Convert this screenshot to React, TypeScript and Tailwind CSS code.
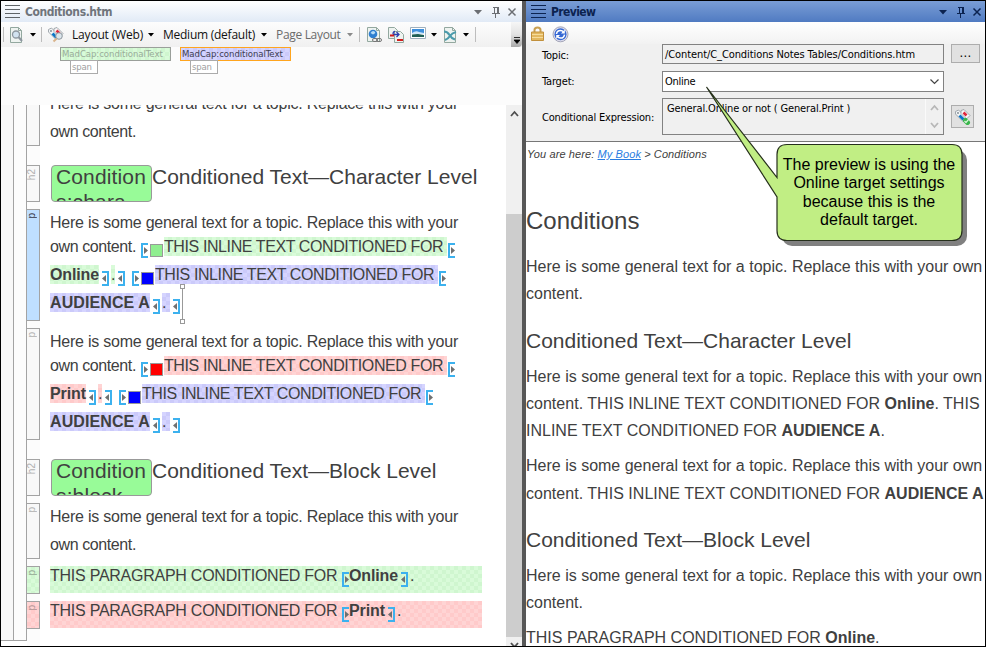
import type { ReactNode } from "react";

const GREEN = "bg-[repeating-conic-gradient(#cff6cf_0_25%,#d9fbd9_0_50%)] bg-[length:8px_8px]";
const BLUE = "bg-[repeating-conic-gradient(#cbcafa_0_25%,#d5d4ff_0_50%)] bg-[length:8px_8px]";
const RED = "bg-[repeating-conic-gradient(#ffcaca_0_25%,#ffd4d4_0_50%)] bg-[length:8px_8px]";
const TAHOMA = "font-['DejaVu_Sans_Condensed','DejaVu_Sans',sans-serif]";

function Lines({ color }: { color: string }) {
  return (
    <svg width="15" height="14" className="shrink-0" shapeRendering="crispEdges">
      <path d="M0 .5h15M0 4.5h15M0 8.5h15M0 12.5h15" stroke={color} />
    </svg>
  );
}

function WindowButtons({ color }: { color: string }) {
  return (
    <svg width="44" height="14" className="shrink-0" fill="none" stroke={color}>
      <path d="M1 5h8l-4 4.500z" fill={color} stroke="none" />
      <path d="M20 2.500h6M21.500 2v7M25.500 2v7M24.500 2v7M19 8.500h8M22.500 9v4" shapeRendering="crispEdges" />
      <path d="M35.500 3.500l7 7M42.500 3.500l-7 7" strokeWidth="1.500" />
    </svg>
  );
}

function Caret({ className, color = "#000" }: { className: string; color?: string }) {
  return (
    <svg width="6" height="4" className={"shrink-0 " + className}>
      <path d="M0 0h6l-3 3.400z" fill={color} />
    </svg>
  );
}

function Sep({ className }: { className: string }) {
  return <div className={"h-[15px] w-px shrink-0 bg-[#bdbdbd] " + className} />;
}

function TagsIcon() {
  return (
    <g>
      <path d="M1.500 2.500l3-1.500 8 8-3.500 3.500-7.500-7.500z" fill="#f1f4f6" stroke="#9aa0a6" strokeWidth=".9" />
      <path d="M7 1.500l3-1L16 6.500 12.500 10 7 4.500z" fill="#f6f6f6" stroke="#9aa0a6" strokeWidth=".9" />
      <circle cx="4" cy="4" r=".9" fill="#7d858c" />
      <path d="M5.500 6.500l4 4" stroke="#0a76c8" strokeWidth="2.800" />
      <path d="M9.500 3.500l3 3" stroke="#e0263a" strokeWidth="2.600" />
    </g>
  );
}

function Open({ className = "" }: { className?: string }) {
  return (
    <svg width="7" height="15" className={"mt-[6px] shrink-0 " + className}>
      <path d="M7 1H1v13h6" fill="none" stroke="#3cb1ee" strokeWidth="2" />
      <path d="M3 4l4 3.500L3 11z" fill="#707070" />
    </svg>
  );
}

function Close({ className }: { className: string }) {
  return (
    <svg width="7" height="15" className={"mt-[6px] shrink-0 " + className}>
      <path d="M0 1h6v13H0" fill="none" stroke="#3cb1ee" strokeWidth="2" />
      <path d="M4 4L0 7.500 4 11z" fill="#707070" />
    </svg>
  );
}

function Square({ className }: { className: string }) {
  return <div className={"mt-[7px] ml-[2px] mr-px size-[13px] shrink-0 border border-[#999] " + className} />;
}

function Row({ className = "", children }: { className?: string; children: ReactNode }) {
  return <div className={"flex h-[19px] shrink-0 whitespace-nowrap leading-[19px] " + className}>{children}</div>;
}

const general = "Here is some general text for a topic. Replace this with your";

function Inline({ tone }: { tone: string }) {
  return <span className={"w-[283px] shrink-0 tracking-[-0.4px] " + tone}>THIS INLINE TEXT CONDITIONED FOR</span>;
}

function Audience() {
  return (
    <>
      <b className={"w-[100px] shrink-0 tracking-[0.1px] " + BLUE}>AUDIENCE A</b>
      <Close className="ml-[3px]" />
      <span className={"ml-[2px] w-[8px] shrink-0 " + BLUE}>.</span>
      <Close className="ml-[3px]" />
    </>
  );
}

function Heading({ tail, children }: { tail: string; children: ReactNode }) {
  return (
    <div className="flex h-[37px] shrink-0 whitespace-nowrap pl-px text-[21px] leading-6">
      <div className="w-[101px] shrink-0 overflow-hidden rounded-[4px] border border-[#999] bg-[#98fb98] pl-1 tracking-[0.14px]">
        <div className="-mt-px">Condition</div>
        <div className="mt-px">{tail}</div>
      </div>
      <div>{children}</div>
    </div>
  );
}

function Block({ label, className }: { label: string; className: string }) {
  return (
    <div className={"flex w-[13px] shrink-0 justify-end border-r border-y border-[#a3a3a3] pr-[3px] pt-[3px] " + className}>
      <span className="rotate-180 self-start text-[10px] leading-[9px] [writing-mode:vertical-rl]">{label}</span>
    </div>
  );
}

function ElementTag({ frame, fill }: { frame: string; fill: string }) {
  return (
    <div className={"flex w-[111px] shrink-0 flex-col " + TAHOMA}>
      <div className={"h-[14px] whitespace-nowrap border pl-px text-[9.500px] leading-[12px] tracking-[-0.05px] " + frame + " " + fill}>
        MadCap:conditionalText
      </div>
      <div className="-mt-px ml-[10px] h-[14px] w-[28px] border border-[#ababab] bg-white pl-px text-[9.500px] leading-[12px] tracking-[-0.2px] text-[#a0a0a0]">
        span
      </div>
    </div>
  );
}

function Editor() {
  return (
    <div className="flex w-[521px] shrink-0 flex-col bg-white">
      <div className="flex h-[21px] shrink-0 items-center bg-linear-to-b from-white to-[#e1eaf6] pl-1">
        <Lines color="#5f6468" />
        <span className={"ml-[5px] text-[12px] font-bold tracking-[-0.42px] text-[#70757c] " + TAHOMA}>Conditions.htm</span>
        <div className="ml-auto mr-[5px]">
          <WindowButtons color="#6b6e73" />
        </div>
      </div>
      <div className="flex h-[25px] shrink-0 items-center bg-linear-to-b from-[#fdfdfd] to-[#f0f0f0] pl-[2px] font-['Open_Sans',sans-serif] text-[12px] whitespace-nowrap text-[#111]">
        <Sep className="" />
        <svg width="14" height="16" className="ml-[6px] shrink-0">
          <path d="M.5.5h8l3 3v12H.5z" fill="#eef3f0" stroke="#93a89f" />
          <path d="M8.500.5v3h3" fill="none" stroke="#93a89f" />
          <circle cx="6" cy="7.500" r="3.500" fill="#d2e3f0" stroke="#8d979f" strokeWidth="1.300" />
          <path d="M8.500 10l3.500 4" stroke="#8d979f" strokeWidth="2" />
        </svg>
        <Caret className="ml-[6px]" />
        <Sep className="ml-[5px]" />
        <svg width="17" height="16" className="ml-[5px] shrink-0">
          <TagsIcon />
          <circle cx="12" cy="9" r="3.300" fill="#dce6ec" stroke="#8d979f" />
          <path d="M9.700 11.500L6.500 14.500" stroke="#d9b48c" strokeWidth="2" />
        </svg>
        <span className="ml-[8px] w-[71px] tracking-[-0.18px]">Layout (Web)</span>
        <Caret className="ml-[5px]" />
        <span className="ml-[9px] w-[92px] tracking-[-0.25px]">Medium (default)</span>
        <Caret className="ml-[6px]" />
        <span className="ml-[9px] w-[65px] tracking-[-0.32px] text-[#6b6b6b]">Page Layout</span>
        <Caret className="ml-[6px]" color="#8a8a8a" />
        <Sep className="ml-[6px]" />
        <svg width="15" height="16" className="ml-[7px] shrink-0">
          <path d="M.5.5h9l3 3v11H.5z" fill="#eef3f0" stroke="#93a89f" />
          <path d="M9.500.5v3h3" fill="none" stroke="#93a89f" />
          <circle cx="6" cy="7" r="4.300" fill="#2f7fd0" />
          <path d="M3.500 6q2-3 4-1.500t-1.500 3z" fill="#b5dcf7" />
          <rect x="5.500" y="11.500" width="5" height="3" rx="1.500" fill="#eee" stroke="#777" />
          <rect x="9.500" y="11.500" width="5" height="3" rx="1.500" fill="none" stroke="#777" />
        </svg>
        <svg width="17" height="16" className="ml-[6px] shrink-0">
          <path d="M.5.5h6l3 3v8h-9z" fill="#eef3f0" stroke="#93a89f" />
          <path d="M6.500 4.500h6l3 3v8h-9z" fill="#eef3f0" stroke="#93a89f" />
          <path d="M5 7.500h6M8.500 5l2.500 2.500L8.500 10M5 7.500q0-3 2-3" fill="none" stroke="#2c3fae" strokeWidth="1.300" />
          <path d="M2 8.500h4M9 13h6" stroke="#d21c1c" strokeWidth="2" />
        </svg>
        <svg width="17" height="13" className="ml-[5px] -mt-[3px] shrink-0">
          <path d="M.5.500h15v11H.5z" fill="#fff" stroke="#9fb0bd" />
          <path d="M2 2h12v4H2z" fill="#3d8fdc" />
          <path d="M2 6q4-3 7-1l5 1v1H2z" fill="#cfe7fa" />
          <path d="M2 7.500l6-.5 6 1V10H2z" fill="#1f5f55" />
        </svg>
        <Caret className="ml-[4px]" />
        <svg width="14" height="16" className="ml-[7px] shrink-0">
          <path d="M.5.5h8l3 3v12H.5z" fill="#eef3f0" stroke="#93a89f" />
          <path d="M8.500.5v3h3" fill="none" stroke="#93a89f" />
          <path d="M0 4.500q3.500 0 5.500 3.500t5.500 4.500M12 5Q8 6 6 9t-5 4" fill="none" stroke="#4a9aab" strokeWidth="2.200" />
        </svg>
        <Caret className="ml-[5px]" />
        <Sep className="ml-[6px]" />
        <div className="ml-auto flex h-[25px] w-[11px] items-end justify-center rounded-br-[4px] bg-linear-to-b from-[#f6f6f6] via-[#e2e2e2] to-[#a8a8a8] pb-[3px]">
          <svg width="6" height="7">
            <path d="M0 .5h6M0 3h6L3 6.500z" fill="#000" stroke="#000" strokeWidth=".8" />
          </svg>
        </div>
      </div>
      <div className="flex h-[58px] shrink-0 gap-[9px] bg-[#fcfcfc] pl-[59px]">
        <ElementTag frame="border-[#9a9f9a] text-[#9aac9a]" fill={GREEN} />
        <ElementTag frame="border-[#ffa51e] text-[#3c3c50]" fill={BLUE} />
      </div>
      <div className="flex min-h-0 flex-1 overflow-hidden">
        <div className="flex h-[536px] shrink-0 border-b border-[#a3a3a3]">
          <div className="w-[13px] border-r border-[#a3a3a3] bg-[#f8f8f8]" />
          <div className="w-[13px] border-r border-[#a3a3a3] bg-[#fcfcfc]" />
        </div>
        <div className="flex w-[13px] shrink-0 flex-col bg-[#fcfcfc] text-[#b0b0b0]">
          <Block label="" className="h-[41px] border-t-0 bg-[#f8f8f8]" />
          <Block label="h2" className="mt-[19px] h-[37px] bg-[#f8f8f8]" />
          <Block label="p" className="mt-[7px] h-[112px] bg-[#bfdfff] text-[#334]" />
          <Block label="p" className="mt-[7px] h-[112px] bg-[#f8f8f8]" />
          <Block label="h2" className="mt-[19px] h-[37px] bg-[#f8f8f8]" />
          <Block label="p" className="mt-[7px] h-[56px] bg-[#f8f8f8]" />
          <Block label="p" className={"mt-[7px] h-[28px] text-[#93a893] " + GREEN} />
          <Block label="p" className={"mt-[7px] h-[28px] text-[#b09393] " + RED} />
        </div>
        <div className="ml-[10px] flex w-[432px] shrink-0 flex-col text-[16px] text-[#404040]">
          <Row className="-mt-[11px] tracking-[-0.236px]">{general}</Row>
          <Row className="mt-[9px] tracking-[-0.4px]">own content.</Row>
          <div className="h-[24px] shrink-0" />
          <Heading tail="s:chara">Conditioned Text—Character Level</Heading>
          <Row className="mt-[11px] tracking-[-0.236px]">{general}</Row>
          <Row className="mt-[5px]">
            <span className="w-[91px] shrink-0 tracking-[-0.4px]">own content.</span>
            <Open />
            <Square className="bg-[#90ee90]" />
            <Inline tone={GREEN} />
            <Open className="ml-px" />
          </Row>
          <Row className="mt-[9px]">
            <b className={"w-[49px] shrink-0 tracking-[-0.13px] " + GREEN}>Online</b>
            <Close className="ml-[3px]" />
            <span className={"ml-[2px] w-[4px] shrink-0 " + GREEN}>.</span>
            <Close className="ml-[3px]" />
            <Open className="ml-[7px]" />
            <Square className="bg-[#0000ff]" />
            <Inline tone={BLUE} />
            <Open className="ml-px" />
          </Row>
          <Row className="mt-[9px]">
            <Audience />
            <svg width="5" height="40" className="-mt-[9px] shrink-0" shapeRendering="crispEdges">
              <path d="M2.500 5v30M.5.500h4v4h-4zM.5 35.500h4v4h-4z" fill="#fff" stroke="#999" />
            </svg>
          </Row>
          <Row className="mt-[20px] tracking-[-0.236px]">{general}</Row>
          <Row className="mt-[5px]">
            <span className="w-[91px] shrink-0 tracking-[-0.4px]">own content.</span>
            <Open />
            <Square className="bg-[#ff0000]" />
            <Inline tone={RED} />
            <Open className="ml-px" />
          </Row>
          <Row className="mt-[9px]">
            <b className={"w-[36px] shrink-0 tracking-[-0.09px] " + RED}>Print</b>
            <Close className="ml-[3px]" />
            <span className={"ml-[2px] w-[4px] shrink-0 " + RED}>.</span>
            <Close className="ml-[3px]" />
            <Open className="ml-[7px]" />
            <Square className="bg-[#0000ff]" />
            <Inline tone={BLUE} />
            <Open className="ml-px" />
          </Row>
          <Row className="mt-[9px]">
            <Audience />
          </Row>
          <div className="h-[28px] shrink-0" />
          <Heading tail="s:block">Conditioned Text—Block Level</Heading>
          <Row className="mt-[11px] tracking-[-0.236px]">{general}</Row>
          <Row className="mt-[9px] tracking-[-0.4px]">own content.</Row>
          <div className={"mt-[12px] h-[27px] shrink-0 " + GREEN}>
            <Row>
              <span className="w-[292px] shrink-0 tracking-[-0.25px]">THIS PARAGRAPH CONDITIONED FOR</span>
              <Open />
              <b className="w-[49px] shrink-0 tracking-[-0.13px]">Online</b>
              <Close className="ml-[3px]" />
              <span className="ml-[2px]">.</span>
            </Row>
          </div>
          <div className={"mt-[8px] h-[27px] shrink-0 " + RED}>
            <Row>
              <span className="w-[292px] shrink-0 tracking-[-0.25px]">THIS PARAGRAPH CONDITIONED FOR</span>
              <Open />
              <b className="w-[36px] shrink-0 tracking-[-0.09px]">Print</b>
              <Close className="ml-[3px]" />
              <span className="ml-[2px]">.</span>
            </Row>
          </div>
        </div>
        <div className="ml-auto flex w-[16px] shrink-0 flex-col items-center bg-[#f0f0f0]">
          <svg width="9" height="109" className="shrink-0">
            <path d="M1 11l3.500-4L8 11" fill="none" stroke="#505050" strokeWidth="1.800" />
          </svg>
          <div className="h-[423px] w-full shrink-0 bg-[#cdcdcd]" />
          <svg width="9" height="9" className="shrink-0">
            <path d="M1 6l3.500 4L8 6" fill="none" stroke="#505050" strokeWidth="1.800" />
          </svg>
        </div>
      </div>
    </div>
  );
}

function Preview() {
  return (
    <div className="flex min-w-0 flex-1 flex-col bg-white">
      <div className="flex h-[21px] shrink-0 items-center bg-linear-to-b from-[#7a9dd5] to-[#507bc2] pl-[5px]">
        <Lines color="#0c2350" />
        <span className={"ml-[5px] text-[12px] font-bold tracking-[-0.6px] text-[#0c2350] " + TAHOMA}>Preview</span>
        <div className="ml-auto mr-[3px]">
          <WindowButtons color="#0c2350" />
        </div>
      </div>
      <div className="flex h-[22px] shrink-0 bg-linear-to-b from-white to-[#f2f2f2] pl-[5px] pt-[4px]">
        <svg width="13" height="16">
          <path d="M3.500 7V4q0-2.500 3-2.500t3 2.500v3" fill="none" stroke="#c9a052" strokeWidth="2" />
          <path d="M.5 6h12v8.500H.5z" fill="#e3b860" stroke="#c1903c" />
          <path d="M1 8.500h11M1 11.500h11" stroke="#f6dc9c" />
        </svg>
        <svg width="18" height="17" className="ml-[8px]">
          <circle cx="8.500" cy="8.300" r="7.500" fill="#dcdcec" stroke="#a3a5b8" />
          <circle cx="8.500" cy="8.300" r="6" fill="#3568d4" />
          <path d="M4.500 8q.5-3.500 4-3.500 2 0 3 1.500M12.500 8.600q-.5 3.500-4 3.500-2 0-3-1.500" fill="none" stroke="#fff" strokeWidth="1.500" />
          <path d="M12.800 3.500v4H9zM4.200 13V9H8z" fill="#fff" />
        </svg>
      </div>
      <div className={"flex h-[98px] shrink-0 flex-col border-b border-[#777] bg-[#f0f0f0] pl-[16px] text-[11px] whitespace-nowrap text-black " + TAHOMA}>
        <div className="flex h-[20px] shrink-0">
          <span className="w-[120px] pt-[4px] leading-[16px] tracking-[-0.18px]">Topic:</span>
          <div className="w-[282px] border border-[#828282] pl-[2px] leading-[19px] tracking-[-0.09px]">/Content/C_Conditions Notes Tables/Conditions.htm</div>
          <div className="ml-[7px] h-[19px] w-[29px] border border-[#adadad] bg-[#e1e1e1] text-center text-[13px] leading-[15px] tracking-[0.3px]">...</div>
        </div>
        <div className="mt-[7px] flex h-[21px] shrink-0">
          <span className="w-[120px] pt-[3px] leading-[16px] tracking-[-0.18px]">Target:</span>
          <div className="flex w-[282px] items-center justify-between border border-[#828282] bg-white pl-[2px] pr-[3px] tracking-[-0.25px]">
            <span className="pt-px">Online</span>
            <svg width="11" height="7">
              <path d="M1.500 1.500l4 4 4-4" fill="none" stroke="#444" strokeWidth="1.200" />
            </svg>
          </div>
        </div>
        <div className="mt-[6px] flex h-[37px] shrink-0">
          <span className="w-[120px] pt-[12px] leading-[16px] tracking-[-0.18px]">Conditional Expression:</span>
          <div className="flex w-[282px] justify-between border border-[#828282] pl-[4px]">
            <span className="pt-[2px] leading-[16px] tracking-[-0.14px]">General.Online or not ( General.Print )</span>
            <svg width="18" height="35" className="border-l border-[#fafafa]">
              <path d="M5 11l3.500-4 3.500 4M5 24l3.500 4 3.500-4" fill="none" stroke="#b8b8b8" strokeWidth="1.800" />
            </svg>
          </div>
          <div className="ml-[7px] mt-[7px] grid size-[23px] place-items-center border border-[#adadad] bg-[#e1e1e1]">
            <svg width="17" height="16">
              <TagsIcon />
              <path d="M11.500 11.500l2 2" stroke="#37b54a" strokeWidth="5" strokeLinecap="round" />
              <path d="M10.500 12l1.500 1.500 2.500-3" fill="none" stroke="#d8f5d8" strokeWidth="1.200" />
            </svg>
          </div>
        </div>
      </div>
      <div className="flex flex-1 flex-col overflow-hidden text-[16px] text-[#404040]">
        <div className="ml-px mt-[4px] shrink-0 text-[11px] italic leading-[16px] tracking-[0.1px]">
          You are here: <span className="text-[#2a7de1] underline">My Book</span> &gt; Conditions
        </div>
        <div className="mt-[45px] h-[28px] shrink-0 text-[24px] leading-[28px]">Conditions</div>
        <Row className="mt-[22px]">{general} own</Row>
        <Row className="mt-[8px]">content.</Row>
        <div className="mt-[26px] h-6 shrink-0 text-[21px] leading-6">Conditioned Text—Character Level</div>
        <Row className="mt-[14px]">{general} own</Row>
        <Row className="mt-[8px] tracking-[0.025px]"><span>content. THIS INLINE TEXT CONDITIONED FOR <b>Online</b>. THIS</span></Row>
        <Row className="mt-[8px]"><span>INLINE TEXT CONDITIONED FOR <b>AUDIENCE A</b>.</span></Row>
        <Row className="mt-[16px]">{general} own</Row>
        <Row className="mt-[9px] tracking-[0.025px]"><span>content. THIS INLINE TEXT CONDITIONED FOR <b>AUDIENCE A</b></span></Row>
        <div className="mt-[25px] h-6 shrink-0 text-[21px] leading-6">Conditioned Text—Block Level</div>
        <Row className="mt-[14px]">{general} own</Row>
        <Row className="mt-[8px]">content.</Row>
        <Row className="mt-[16px]"><span>THIS PARAGRAPH CONDITIONED FOR <b>Online</b>.</span></Row>
      </div>
    </div>
  );
}

function Callout() {
  return (
    <div className="absolute left-[699px] top-[79px] h-[170px] w-[270px]">
      <svg width="270" height="170" className="absolute inset-0">
        <rect x="82" y="70" width="185" height="96" rx="10" fill="#808080" />
        <path
          d="M87 64.500h165q10 0 10 10v76q0 10-10 10H87q-10 0-10-10V117L6.500 7 77 97.500V74.500q0-10 10-10z"
          fill="#c1ee84"
          stroke="#26301c"
          strokeWidth="1.200"
        />
      </svg>
      <div className="absolute left-[76px] top-[76px] w-[186px] text-center text-[16px] leading-[18.300px] whitespace-nowrap text-black">
        <div>The preview is using the</div>
        <div>Online target settings</div>
        <div>because this is the</div>
        <div>default target.</div>
      </div>
    </div>
  );
}

export default function App() {
  return (
    <div className="relative flex h-[647px] w-[986px] overflow-hidden border border-black bg-white font-['Liberation_Sans',Arial,sans-serif]">
      <Editor />
      <div className="w-[4px] shrink-0 bg-[#575757]" />
      <Preview />
      <Callout />
    </div>
  );
}
